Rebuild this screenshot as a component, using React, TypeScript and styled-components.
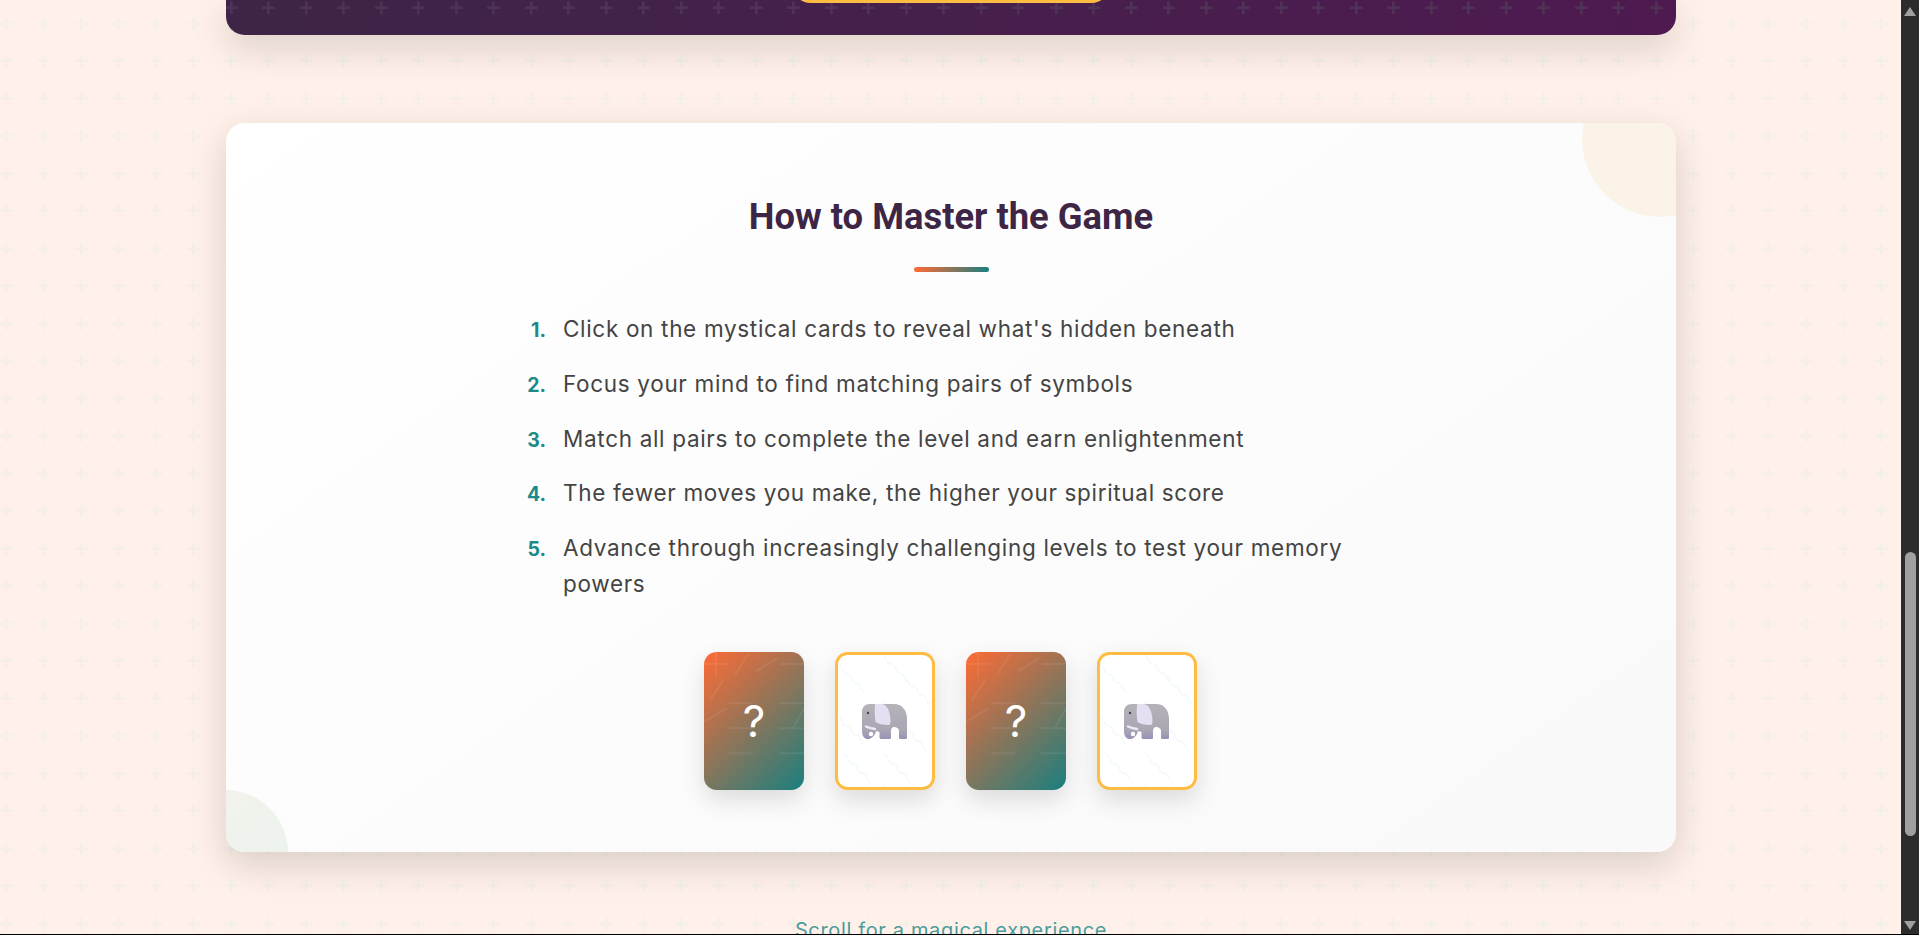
import * as React from "react";
import styled, { createGlobalStyle } from "styled-components";

const plus = (color: string) =>
  `url("data:image/svg+xml,%3Csvg xmlns='http://www.w3.org/2000/svg' width='37.5' height='37.5'%3E%3Cpath d='M6.25 17.25v12.5M0 23.5h12.5' stroke='${color}' stroke-width='2.5' fill='none'/%3E%3C/svg%3E")`;

const backTexture = `url("data:image/svg+xml,%3Csvg xmlns='http://www.w3.org/2000/svg' width='100' height='138'%3E%3Cpath d='M12 0v25M0 12h24M31 23L44 2M52 19L73 6M76 12h24M6 48L19 28M1 69L23 56M25 51h24M75 51h25M89 76L100 56M25 76h24M75 76h25M25 101h24M75 101h25' stroke='%23fff' stroke-opacity='.07' stroke-width='2' fill='none'/%3E%3C/svg%3E")`;

const wave = "c6 0 2 9 9 9s2 9 9 9 2 9 9 9";
const faceTexture = `url("data:image/svg+xml,%3Csvg xmlns='http://www.w3.org/2000/svg' width='93' height='130'%3E%3Cpath d='M0 10${wave}M44 0${wave}M66 22${wave}M0 62${wave}M44 48${wave}M62 68${wave}M6 100${wave}M46 100${wave}' stroke='%23f2fbfa' stroke-width='1.5' fill='none'/%3E%3C/svg%3E")`;

const GlobalStyle = createGlobalStyle`
  html, body {
    margin: 0;
    height: 100%;
    overflow: hidden;
    background: #000;
  }
`;

const steps = [
  "Click on the mystical cards to reveal what's hidden beneath",
  "Focus your mind to find matching pairs of symbols",
  "Match all pairs to complete the level and earn enlightenment",
  "The fewer moves you make, the higher your spiritual score",
  "Advance through increasingly challenging levels to test your memory powers"
];

const Root = styled.div`
  display: flex;
  height: 934px;
  overflow: hidden;
`;

const Page = styled.main`
  flex: 1;
  min-width: 0;
  padding: 0 225px 0 226px;
  background-color: #fff1e9;
  background-image: ${plus("%23f4efe8")};
  font-family: Inter, sans-serif;
`;

const Hero = styled.section`
  height: 35px;
  display: flex;
  justify-content: center;
  border-radius: 0 0 18.75px 18.75px;
  background-color: #45214b;
  background-image: ${plus("%234f3356")}, linear-gradient(90deg, #3e2547, #4e1a50);
  background-position: -1px -16px, 0 0;
  box-shadow: 0 12.5px 37.5px rgba(0, 0, 0, 0.15);
`;

const HeroButton = styled.div`
  width: 320px;
  height: 40px;
  margin-top: -37px;
  border-radius: 37.5px;
  background: #ffbc42;
`;

const PanelShadow = styled.div`
  margin-top: 88px;
  border-radius: 18.75px;
  box-shadow: 0 12.5px 37.5px rgba(0, 0, 0, 0.15);
`;

const Panel = styled.section`
  position: relative;
  overflow: hidden;
  height: 729px;
  box-sizing: border-box;
  padding-top: 69px;
  border-radius: 18.75px;
  background: linear-gradient(145deg, #ffffff, #f9f9f9);
`;

const Blob = styled.div<{ $corner: "top" | "bottom" }>`
  position: absolute;
  border-radius: 50%;
  ${(p) =>
    p.$corner === "top"
      ? `top: -62.5px; right: -62.5px; width: 157px; height: 156px; background: #fcf3e8;`
      : `bottom: -62.5px; left: -63.5px; width: 125px; height: 125px; background: linear-gradient(135deg, #f4f3ea, #eaf2ef);`}
`;

const Title = styled.h2`
  margin: 0;
  text-align: center;
  font-family: Roboto, sans-serif;
  font-size: 37.5px;
  line-height: 48px;
  font-weight: 700;
  color: #3d2645;
  transform: scaleX(0.97);
`;

const TitleBar = styled.div`
  width: 75px;
  height: 5px;
  margin: 27px auto 39px;
  border-radius: 2.5px;
  background: linear-gradient(90deg, #ff6b35, #1a7f7f);
`;

const Steps = styled.ol`
  list-style: none;
  width: 840px;
  margin: 0 0 0 287px;
  padding: 0;
`;

const Step = styled.li`
  display: grid;
  grid-template-columns: 33px 1fr;
  column-gap: 17px;
  align-items: baseline;
  margin-bottom: 18.75px;
  font-size: 22.5px;
  line-height: 36px;
  letter-spacing: 0.68px;
  color: #444;
`;

const StepNumber = styled.span`
  text-align: right;
  font-weight: 700;
  font-size: 19.5px;
  line-height: 20px;
  letter-spacing: 0;
  color: #1a8a8a;
`;

const CardRow = styled.div`
  display: flex;
  justify-content: center;
  gap: 31px;
  margin-top: 50px;
  padding-right: 1px;
`;

const CardBack = styled.div`
  width: 100px;
  height: 137.5px;
  display: flex;
  align-items: center;
  justify-content: center;
  border-radius: 12.5px;
  background: ${backTexture}, linear-gradient(135deg, #ff6b35, #1a7f7f);
  box-shadow: 0 10px 25px rgba(0, 0, 0, 0.13);
  color: #fff;
  font-size: 44px;
  font-weight: 400;
`;

const CardFace = styled.div`
  width: 100px;
  height: 137.5px;
  box-sizing: border-box;
  display: flex;
  align-items: center;
  justify-content: center;
  border: 3.75px solid #ffbc42;
  border-radius: 12.5px;
  background: #fff ${faceTexture};
  box-shadow: 0 10px 25px rgba(0, 0, 0, 0.13);
`;

const ScrollHint = styled.p`
  margin: 63px 0 0;
  text-align: center;
  font-size: 20px;
  line-height: 30px;
  letter-spacing: 0.65px;
  color: #4a9c9c;
`;

const Rail = styled.aside`
  width: 18px;
  flex: none;
  display: flex;
  flex-direction: column;
  align-items: center;
  padding-top: 7px;
  box-sizing: border-box;
  background: #2c2c2c;
`;

const RailArrow = styled.div<{ $down?: boolean }>`
  width: 0;
  height: 0;
  border-left: 6.5px solid transparent;
  border-right: 6.5px solid transparent;
  ${(p) => (p.$down ? "border-top: 9px solid #a0a0a0; margin-top: 84.5px;" : "border-bottom: 9px solid #a0a0a0;")}
`;

const RailThumb = styled.div`
  width: 11px;
  height: 284px;
  margin-top: 536px;
  border-radius: 5.5px;
  background: #a0a0a0;
`;

const Elephant = () => (
  <svg width="56" height="46" viewBox="0 0 56 46">
    <defs>
      <linearGradient id="hide" x1="0" y1="0" x2="0" y2="1">
        <stop offset="0" stopColor="#b5b3b8" />
        <stop offset="0.75" stopColor="#aaa6b3" />
        <stop offset="1" stopColor="#9a8fb8" />
      </linearGradient>
    </defs>
    <path
      d="M13 6H37C45 6 50 12 50 21V39.5C50 40.5 49.5 41 48.5 41H43.5C42.5 41 42 40.5 42 39.5V33C42 30 39 29 37 29C35 29 34 31 34 33V39.5C34 40.5 33.5 41 32.5 41H24C23 41 22.5 40 22.5 39V34L19 33C18 38 14 41.5 10 41C6.5 40.5 5 37 5 33V14C5 9 8 6 13 6Z"
      fill="url(#hide)"
    />
    <path d="M18 6H24C30 6 33 13 33.5 22C33.5 26 33 27 31 27C26 27 21 26 18.5 24C17.5 18 17.5 12 18 6Z" fill="#e6dff2" />
    <path d="M9 28.5C12 30 15 30.5 18 31" stroke="#eee9f6" strokeWidth="2.5" strokeLinecap="round" fill="none" />
    <circle cx="14" cy="36" r="2.2" fill="#fff" />
    <circle cx="11" cy="15" r="1.2" fill="#4a3f55" />
  </svg>
);

export default function App() {
  return (
    <Root>
      <GlobalStyle />
      <Page>
        <Hero>
          <HeroButton />
        </Hero>
        <PanelShadow>
          <Panel>
            <Blob $corner="top" />
            <Blob $corner="bottom" />
            <Title>How to Master the Game</Title>
            <TitleBar />
            <Steps>
              {steps.map((step, i) => (
                <Step key={step}>
                  <StepNumber>{i + 1}.</StepNumber>
                  <span>{step}</span>
                </Step>
              ))}
            </Steps>
            <CardRow>
              <CardBack>?</CardBack>
              <CardFace>
                <Elephant />
              </CardFace>
              <CardBack>?</CardBack>
              <CardFace>
                <Elephant />
              </CardFace>
            </CardRow>
          </Panel>
        </PanelShadow>
        <ScrollHint>Scroll for a magical experience</ScrollHint>
      </Page>
      <Rail>
        <RailArrow />
        <RailThumb />
        <RailArrow $down />
      </Rail>
    </Root>
  );
}
